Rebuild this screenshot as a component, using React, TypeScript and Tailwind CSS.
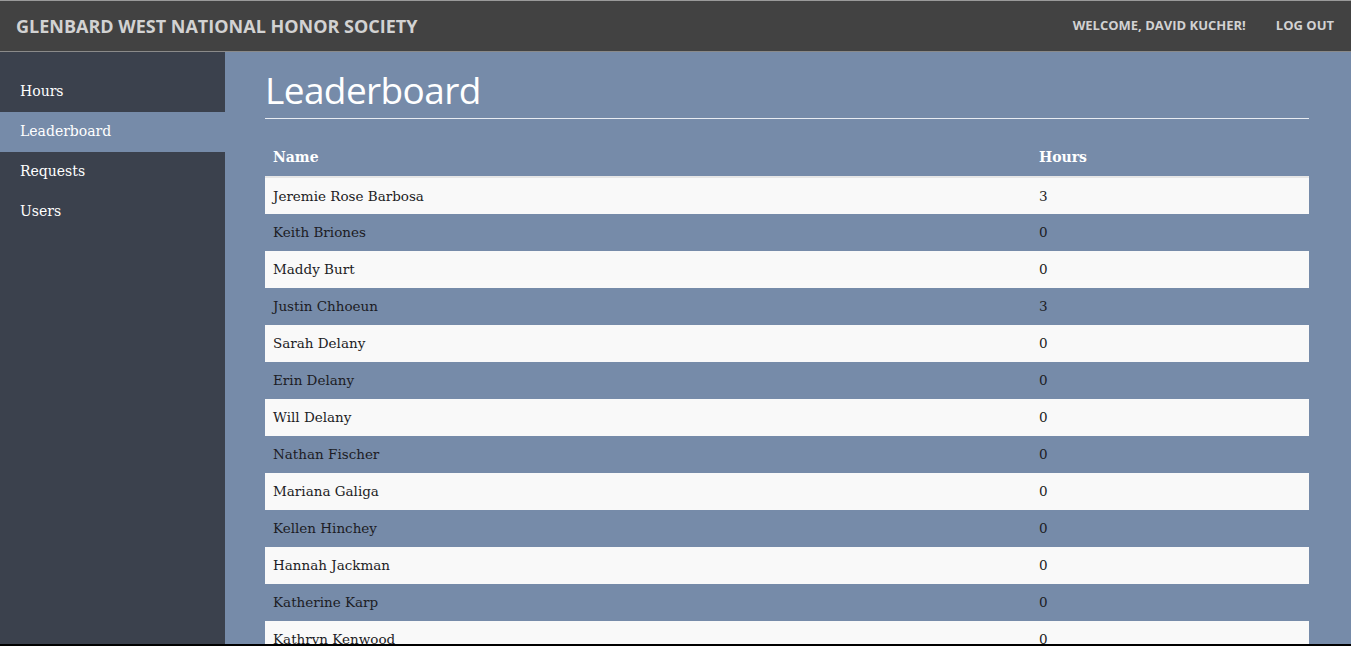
const ROWS: [string, number][] = [
  ["Jeremie Rose Barbosa", 3],
  ["Keith Briones", 0],
  ["Maddy Burt", 0],
  ["Justin Chhoeun", 3],
  ["Sarah Delany", 0],
  ["Erin Delany", 0],
  ["Will Delany", 0],
  ["Nathan Fischer", 0],
  ["Mariana Galiga", 0],
  ["Kellen Hinchey", 0],
  ["Hannah Jackman", 0],
  ["Katherine Karp", 0],
  ["Kathryn Kenwood", 0],
  ["Ryan Lee", 0],
];

const NAV = ["Hours", "Leaderboard", "Requests", "Users"];

export default function App() {
  return (
    <div className="h-[646px] w-[1351px] overflow-hidden flex flex-col bg-[#768ba9] border-t border-[#9a9a9a] border-b-2 border-b-black">
      {/* Top bar */}
      <header className="h-[51px] shrink-0 flex items-center justify-between bg-[#424242] border-b border-[#8a8a8a] pl-[16px] pr-[17px] font-['Open_Sans',sans-serif] font-bold text-[#d2d2d2]">
        <span className="text-[18px] pt-[1px]">GLENBARD WEST NATIONAL HONOR SOCIETY</span>
        <div className="flex items-center gap-[30px] text-[13px]">
          <span>WELCOME, DAVID KUCHER!</span>
          <span>LOG OUT</span>
        </div>
      </header>

      <div className="flex flex-1 min-h-0">
        {/* Sidebar */}
        <nav className="w-[225px] shrink-0 bg-[#3b414d] pt-[20px] font-['DejaVu_Serif',serif] text-[14px] text-white">
          {NAV.map((n) => (
            <div
              key={n}
              className={
                n === "Leaderboard"
                  ? "h-[40px] flex items-center pl-[20px] pb-[1px] bg-[#768ba9]"
                  : "h-[40px] flex items-center pl-[20px] pb-[1px]"
              }
            >
              {n}
            </div>
          ))}
        </nav>

        {/* Main */}
        <main className="flex-1 min-w-0 pl-[40px] pr-[42px] pt-[16px]">
          <h1 className="font-['Open_Sans',sans-serif] text-[37px] leading-[44px] tracking-[-0.6px] text-white pb-[6px] border-b border-[#e8ecf2]">
            Leaderboard
          </h1>
          <table className="w-full mt-[21px] border-collapse font-['DejaVu_Serif',serif] text-[13.5px] text-[#1c1c24]">
            <thead>
              <tr className="h-[37px] border-b-2 border-[#e6e6e6] text-white text-left text-[14px]">
                <th className="pl-[8px] pb-[1px] font-bold w-[766px]">Name</th>
                <th className="pl-[8px] pb-[1px] font-bold">Hours</th>
              </tr>
            </thead>
            <tbody>
              {ROWS.map(([name, hrs], i) => (
                <tr key={name} className={i % 2 === 0 ? "h-[37px] bg-[#f9f9f9]" : "h-[37px]"}>
                  <td className="pl-[8px]">{name}</td>
                  <td className="pl-[8px]">{hrs}</td>
                </tr>
              ))}
            </tbody>
          </table>
        </main>
      </div>
    </div>
  );
}
